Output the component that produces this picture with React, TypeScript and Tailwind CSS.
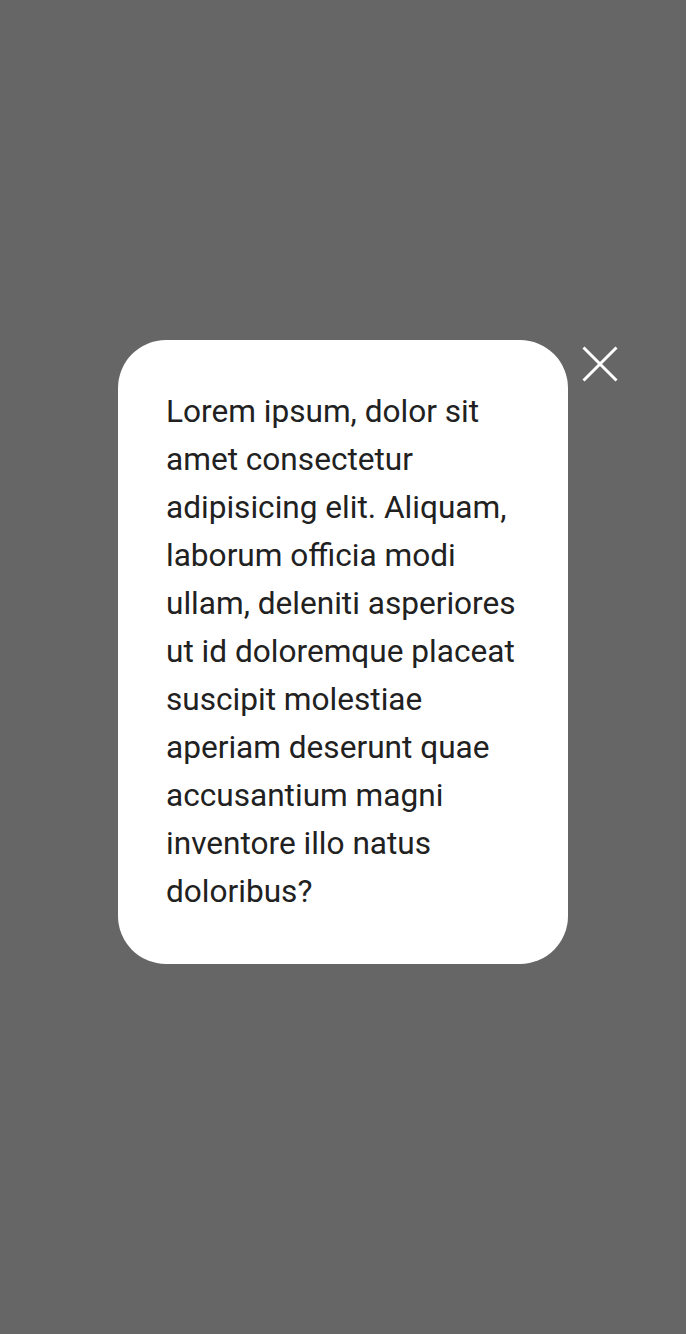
import React from "react";

export default function App() {
  return (
    <div className="min-h-[1334px] w-full bg-[#666666] flex flex-col items-center pt-[340px]" style={{ fontFamily: "Roboto, 'Noto Sans', sans-serif" }}>
      <div className="relative w-[450px] rounded-[48px] bg-white p-[48px]">
        <p className="text-[31.6px] leading-[48px] text-[#212121]">
          Lorem ipsum, dolor sit amet consectetur adipisicing elit. Aliquam, laborum officia modi ullam, deleniti asperiores ut id doloremque placeat suscipit molestiae aperiam deserunt quae accusantium magni inventore illo natus doloribus?
        </p>
        <button className="absolute left-[464px] top-[6px] w-[36px] h-[36px] flex items-center justify-center" aria-label="close">
          <svg width="36" height="36" viewBox="0 0 36 36">
            <path d="M1.5 1.5 L34.5 34.5 M34.5 1.5 L1.5 34.5" stroke="white" strokeWidth="3" fill="none" />
          </svg>
        </button>
      </div>
    </div>
  );
}
